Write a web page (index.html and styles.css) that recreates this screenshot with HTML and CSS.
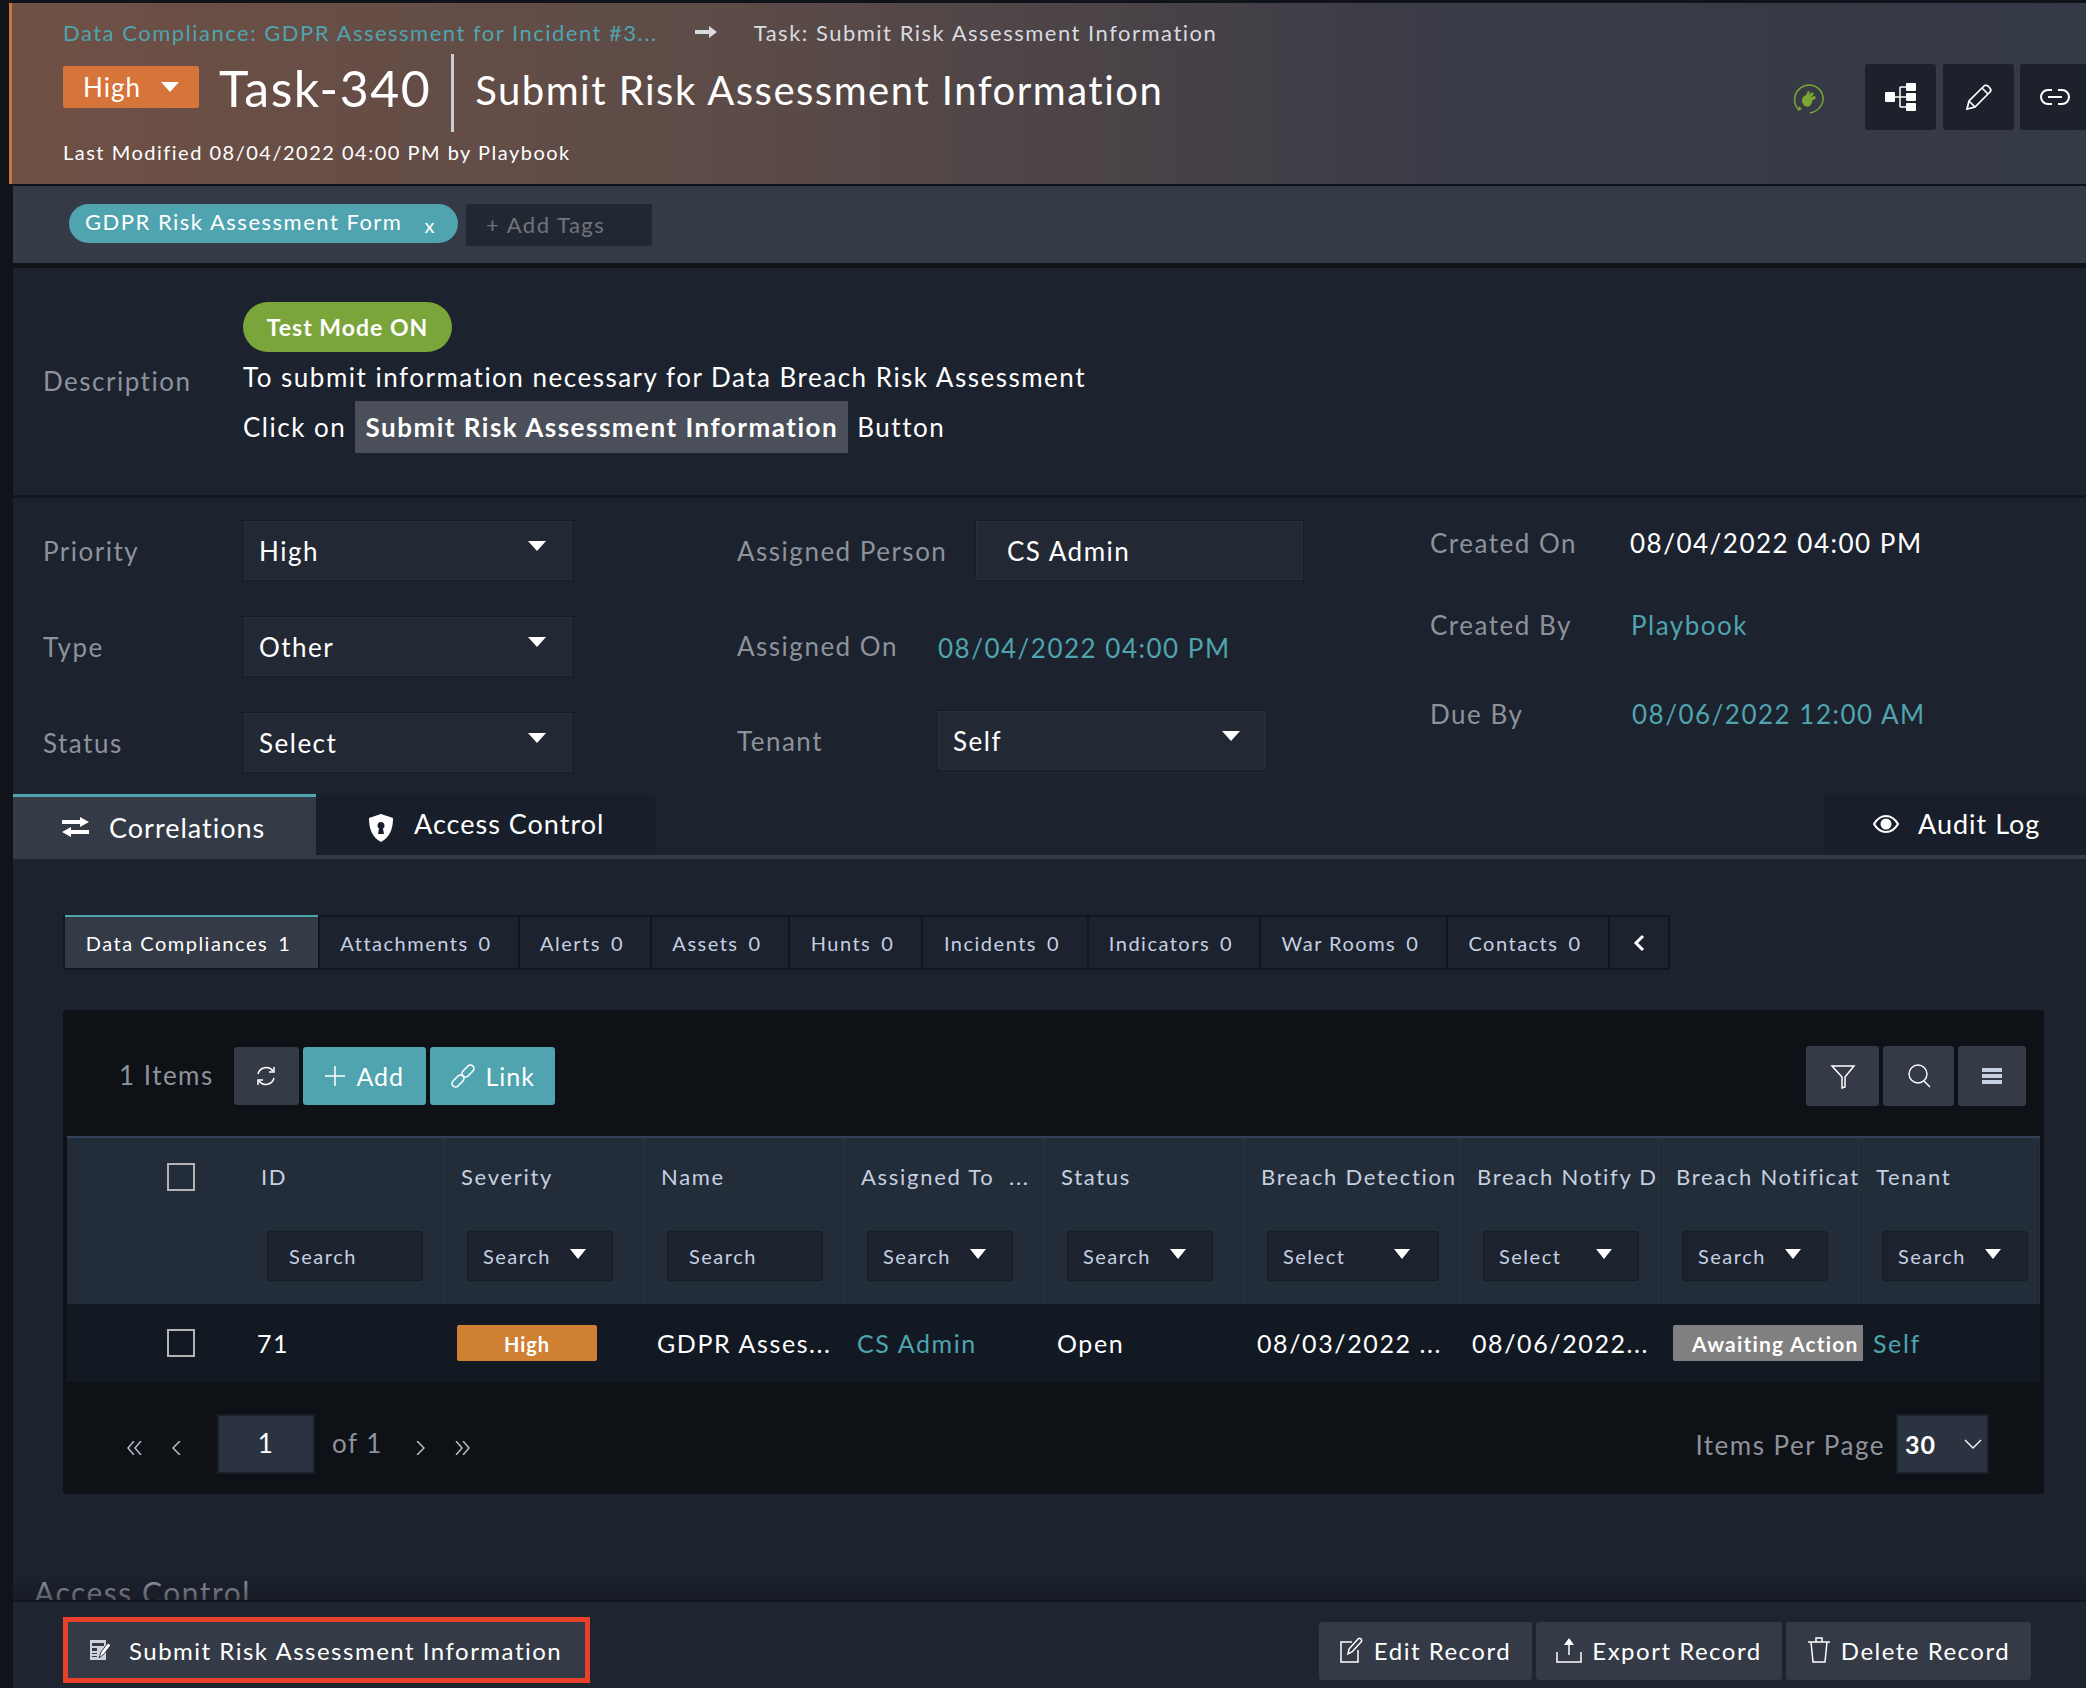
FILE: index.html
```html
<!DOCTYPE html>
<html lang="en">
<head>
    <meta charset="UTF-8">
    <meta name="viewport" content="width=device-width, initial-scale=1.0">
    <title>Task-340</title>
    <link rel="stylesheet" href="styles.css">
</head>
<body>
    <div class="page">
        <header class="task-head">
            <div class="head-left">
                <div class="crumbs">
                    <a class="crumb-link">Data Compliance: GDPR Assessment for Incident #3...</a>
                    <svg class="crumb-arrow" viewBox="0 0 22 12"><path d="M0 4h14V0l8 6-8 6V8H0z" fill="#d8dbe0"/></svg>
                    <span class="crumb-current">Task: Submit Risk Assessment Information</span>
                </div>
                <div class="title-row">
                    <span class="prio-btn">High <i class="caret"></i></span>
                    <span class="task-id">Task-340</span>
                    <h1 class="task-title">Submit Risk Assessment Information</h1>
                </div>
                <div class="modified">Last Modified 08/04/2022 04:00 PM by Playbook</div>
            </div>
            <div class="head-right">
                <svg class="plug" viewBox="0 0 30 30">
                    <path d="M5 26C1 22 0 17 1 12 3 5 9 1 15 1c7 0 13 5 14 12 1 7-4 14-13 16" fill="none" stroke="#78a833" stroke-width="1.5"/>
                    <path d="M4 27l1-5 3 3z" fill="#78a833"/>
                    <path d="M11 22c-3-2-4-6-2-9l3-2 2-4 2 1-1 3 3-3 2 2-3 3 4-1 1 2-4 3c0 4-3 7-7 5z" fill="#78a833"/>
                </svg>
                <button class="icon-btn">
                    <svg viewBox="0 0 32 28" width="32" height="28"><g fill="#fff"><rect x="0" y="9" width="10" height="10" rx="1"/><rect x="21" y="0" width="10" height="8" rx="1"/><rect x="21" y="10" width="10" height="8" rx="1"/><rect x="21" y="20" width="10" height="8" rx="1"/></g><path d="M10 14h11M15 4h6M15 24h6M15 4v20" stroke="#fff" stroke-width="1.5" fill="none"/></svg>
                </button>
                <button class="icon-btn">
                    <svg viewBox="0 0 28 28" width="28" height="28"><path d="M2 26l2-8L19 3c1-1 3-1 5 1s2 4 1 5L10 24zM4 18l6 6M17 5l6 6" fill="none" stroke="#fff" stroke-width="1.7"/></svg>
                </button>
                <button class="icon-btn icon-btn-last">
                    <svg viewBox="0 0 30 18" width="30" height="18"><path d="M12 2H8a7 7 0 0 0 0 14h4M18 2h4a7 7 0 0 1 0 14h-4M8 9h14" fill="none" stroke="#fff" stroke-width="2"/></svg>
                </button>
            </div>
        </header>

        <section class="tag-bar">
            <span class="tag">GDPR Risk Assessment Form <span class="tag-x">x</span></span>
            <span class="add-tags">+ Add Tags</span>
        </section>

        <section class="desc">
            <div class="field-label">Description</div>
            <div class="desc-body">
                <span class="test-pill">Test Mode ON</span>
                <p class="desc-line">To submit information necessary for Data Breach Risk Assessment</p>
                <p class="desc-line desc-line-btn">Click on <b class="desc-hl">Submit Risk Assessment Information</b> Button</p>
            </div>
        </section>

        <section class="fields">
            <div class="col col-one">
                <div class="field"><span class="field-label">Priority</span><span class="select">High <i class="caret"></i></span></div>
                <div class="field"><span class="field-label">Type</span><span class="select">Other <i class="caret"></i></span></div>
                <div class="field"><span class="field-label">Status</span><span class="select">Select <i class="caret"></i></span></div>
            </div>
            <div class="col col-two">
                <div class="field"><span class="field-label label-wide">Assigned Person</span><span class="select person">CS Admin</span></div>
                <div class="field"><span class="field-label label-mid">Assigned On</span><span class="link-text">08/04/2022 04:00 PM</span></div>
                <div class="field"><span class="field-label label-mid">Tenant</span><span class="select">Self <i class="caret"></i></span></div>
            </div>
            <div class="col col-three">
                <div class="meta meta-one"><span class="field-label">Created On</span><span class="meta-val">08/04/2022 04:00 PM</span></div>
                <div class="meta meta-two"><span class="field-label">Created By</span><span class="link-text">Playbook</span></div>
                <div class="meta meta-three"><span class="field-label">Due By</span><span class="link-text">08/06/2022 12:00 AM</span></div>
            </div>
        </section>

        <main class="content">
            <nav class="tabs">
                <a class="tab tab-active">
                    <svg viewBox="0 0 28 20" width="28" height="20"><path d="M0 3h18V0l9 5-9 5V7H0zM27 13H9v-3l-9 5 9 5v-3h18z" fill="#fff"/></svg>
                    Correlations
                </a>
                <a class="tab tab-access">
                    <svg viewBox="0 0 26 28" width="26" height="28"><path fill-rule="evenodd" d="M13 0l12 4c0 11-3 19-12 24C4 23 1 15 1 4zM13 8a3.500 3.500 0 0 0-2 6.400L10 20h6l-1-5.600A3.500 3.500 0 0 0 13 8z" fill="#fff"/></svg>
                    Access Control
                </a>
                <a class="tab tab-audit">
                    <svg viewBox="0 0 26 20" width="26" height="20"><path d="M1 10c3-5 7-8 12-8s9 3 12 8c-3 5-7 8-12 8s-9-3-12-8z" fill="none" stroke="#fff" stroke-width="2.200"/><circle cx="13" cy="10" r="5.500" fill="#fff"/></svg>
                    Audit Log
                </a>
            </nav>

            <div class="subtabs">
                <a class="subtab subtab-active">Data Compliances <span>1</span></a>
                <a class="subtab st-attach">Attachments <span>0</span></a>
                <a class="subtab st-alerts">Alerts <span>0</span></a>
                <a class="subtab st-assets">Assets <span>0</span></a>
                <a class="subtab st-hunts">Hunts <span>0</span></a>
                <a class="subtab st-incidents">Incidents <span>0</span></a>
                <a class="subtab st-indicators">Indicators <span>0</span></a>
                <a class="subtab st-war">War Rooms <span>0</span></a>
                <a class="subtab st-contacts">Contacts <span>0</span></a>
                <a class="subtab st-chev"><svg viewBox="0 0 12 18" width="12" height="18"><path d="M10 2L3 9l7 7" fill="none" stroke="#fff" stroke-width="3"/></svg></a>
            </div>

            <div class="panel">
                <div class="toolbar">
                    <span class="item-count">1 Items</span>
                    <button class="tool-btn refresh">
                        <svg viewBox="0 0 24 24" width="24" height="24"><path d="M4 10a8.500 8.500 0 0 1 15-3M20 14a8.500 8.500 0 0 1-15 3" fill="none" stroke="#fff" stroke-width="1.500"/><path d="M20 3v5h-5M4 21v-5h5" fill="none" stroke="#fff" stroke-width="1.500"/></svg>
                    </button>
                    <button class="teal-btn btn-add">
                        <svg viewBox="0 0 22 22" width="22" height="22"><path d="M11 1v20M1 11h20" stroke="#fff" stroke-width="1.500"/></svg>
                        Add
                    </button>
                    <button class="teal-btn btn-link">
                        <svg viewBox="0 0 26 26" width="26" height="26"><g fill="none" stroke="#fff" stroke-width="1.600"><rect x="1" y="14.500" width="14" height="7" rx="3.500" transform="rotate(-45 8 18)"/><rect x="11" y="4.500" width="14" height="7" rx="3.500" transform="rotate(-45 18 8)"/></g></svg>
                        Link
                    </button>
                    <div class="tool-right">
                        <button class="tool-btn tool-filter">
                            <svg viewBox="0 0 26 26" width="26" height="26"><path d="M2 3h22L15 14v10l-3 1V14z" fill="none" stroke="#fff" stroke-width="1.500"/></svg>
                        </button>
                        <button class="tool-btn tool-search">
                            <svg viewBox="0 0 26 26" width="26" height="26"><circle cx="12" cy="11" r="9" fill="none" stroke="#fff" stroke-width="1.400"/><path d="M18 18l6 6" stroke="#fff" stroke-width="1.400"/></svg>
                        </button>
                        <button class="tool-btn tool-menu">
                            <svg viewBox="0 0 20 16" width="20" height="16"><path d="M0 0h20v4H0zM0 6h20v4H0zM0 12h20v4H0z" fill="#c5d0e0"/></svg>
                        </button>
                    </div>
                </div>

                <div class="grid">
                    <div class="grid-head">
                        <div class="hcell hcell-check"><i class="checkbox"></i></div>
                        <div class="hcell hcell-id"><div class="htitle">ID</div><span class="filter f-input">Search</span></div>
                        <div class="hcell"><div class="htitle">Severity</div><span class="filter f-sel">Search <i class="caret"></i></span></div>
                        <div class="hcell"><div class="htitle">Name</div><span class="filter f-input">Search</span></div>
                        <div class="hcell"><div class="htitle">Assigned To &nbsp;...</div><span class="filter f-sel">Search <i class="caret"></i></span></div>
                        <div class="hcell"><div class="htitle">Status</div><span class="filter f-sel">Search <i class="caret"></i></span></div>
                        <div class="hcell"><div class="htitle">Breach Detection</div><span class="filter f-wide">Select <i class="caret"></i></span></div>
                        <div class="hcell"><div class="htitle">Breach Notify Date</div><span class="filter f-notify">Select <i class="caret"></i></span></div>
                        <div class="hcell"><div class="htitle">Breach Notification</div><span class="filter f-sel">Search <i class="caret"></i></span></div>
                        <div class="hcell"><div class="htitle">Tenant</div><span class="filter f-sel">Search <i class="caret"></i></span></div>
                    </div>
                    <div class="grid-row">
                        <div class="cell cell-check"><i class="checkbox"></i></div>
                        <div class="cell cell-id">71</div>
                        <div class="cell"><span class="badge badge-high">High</span></div>
                        <div class="cell">GDPR Asses...</div>
                        <div class="cell link-text">CS Admin</div>
                        <div class="cell">Open</div>
                        <div class="cell">08/03/2022 ...</div>
                        <div class="cell cell-notify">08/06/2022...</div>
                        <div class="cell cell-await"><span class="badge badge-await">Awaiting Action</span></div>
                        <div class="cell cell-await link-text">Self</div>
                    </div>
                </div>

                <div class="pager">
                    <svg class="pg-arrow pg-first" viewBox="0 0 15 14"><path d="M7 0L1 7l6 7M14 0L8 7l6 7"/></svg>
                    <svg class="pg-arrow pg-prev" viewBox="0 0 9 14"><path d="M8 0L1 7l7 7"/></svg>
                    <span class="pg-input">1</span>
                    <span class="pg-of">of 1</span>
                    <svg class="pg-arrow pg-next" viewBox="0 0 9 14"><path d="M1 0l7 7-7 7"/></svg>
                    <svg class="pg-arrow pg-last" viewBox="0 0 15 14"><path d="M1 0l6 7-6 7M8 0l6 7-6 7"/></svg>
                    <span class="per-page">Items Per Page</span>
                    <span class="per-select">30
                        <svg viewBox="0 0 18 10" width="18" height="10"><path d="M1 1l8 8 8-8" fill="none" stroke="#fff" stroke-width="1.300"/></svg>
                    </span>
                </div>
            </div>

            <h3 class="section-title">Access Control</h3>
            <div class="fade"></div>
        </main>

        <footer class="actions">
            <button class="submit-btn">
                <svg viewBox="0 0 24 24" width="24" height="24"><path d="M2 2h16v20H2z" fill="#cfd3d9"/><path d="M4 5h12v3H4zM4 10h5v3H4zM4 15h5v1H4zM4 18h5v1H4z" fill="#343a46"/><path d="M11 20l2-6 7-9 3 2-7 9z" fill="#fff" stroke="#343a46"/></svg>
                Submit Risk Assessment Information
            </button>
            <div class="actions-right">
                <button class="act-btn act-edit">
                    <svg viewBox="0 0 24 26" width="24" height="26"><path d="M12 5H1v20h17V13" fill="none" stroke="#fff" stroke-width="1.500"/><path d="M8 17l1-5L18 2c1-1 2-1 3 0s1 2 0 3l-9 10z" fill="none" stroke="#fff" stroke-width="1.500"/></svg>
                    Edit Record
                </button>
                <button class="act-btn act-export">
                    <svg viewBox="0 0 26 26" width="26" height="26"><path d="M1 15v10h24V15" fill="none" stroke="#fff" stroke-width="1.500"/><path d="M13 18V2" stroke="#fff" stroke-width="1.500"/><path d="M8 8l5-7 5 7z" fill="#fff"/></svg>
                    Export Record
                </button>
                <button class="act-btn act-delete">
                    <svg viewBox="0 0 24 26" width="24" height="26"><path d="M1 5h22M4 5l2 20h12l2-20M9 5V1h6v4" fill="none" stroke="#fff" stroke-width="1.500"/></svg>
                    Delete Record
                </button>
            </div>
        </footer>
    </div>
</body>
</html>
```
FILE: styles.css
```css
* {
    box-sizing: border-box;
}

html, body {
    margin: 0;
    height: 100%;
}

body {
    font-family: Lato, "Noto Sans", sans-serif;
    color: #fff;
    background-color: #10141a;
    letter-spacing: 1.5px;
    overflow: hidden;
}

button {
    font: inherit;
    letter-spacing: inherit;
    color: inherit;
    border: none;
    display: flex;
    align-items: center;
    justify-content: center;
    padding: 0;
}

h1, h3, p {
    margin: 0;
    font-weight: normal;
}

.page {
    height: 1688px;
    margin-left: 9px;
    padding-top: 3px;
    display: flex;
    flex-direction: column;
    box-shadow: 0 -3px 0 #2f2f2f;
}

/* header */
.task-head {
    height: 181px;
    flex: none;
    display: flex;
    border-left: 3px solid #c9733d;
    background: linear-gradient(90deg, #6f5045 0%, #5c4b47 35%, #3b3c47 68%, #343a46 100%);
    padding-left: 51px;
}

.head-left {
    display: flex;
    flex-direction: column;
}

.crumbs {
    display: flex;
    align-items: center;
    height: 40px;
    margin-top: 9px;
    font-size: 22px;
}

.crumb-link, .link-text {
    color: #4fa4af;
}

.crumb-arrow {
    width: 22px;
    height: 12px;
    margin: 0 37px;
}

.crumb-current {
    color: #d8dbe0;
}

.title-row {
    display: flex;
    align-items: center;
    height: 78px;
    margin-top: 2px;
}

.prio-btn {
    width: 136px;
    height: 42px;
    margin-top: -13px;
    background: #d6743a;
    border-radius: 2px;
    font-size: 26px;
    letter-spacing: 1px;
    padding-left: 20px;
    display: flex;
    align-items: center;
    gap: 20px;
}

.task-id {
    font-size: 50px;
    margin-left: 20px;
    margin-top: -11px;
    line-height: 1;
}

.task-title {
    font-size: 40px;
    height: 78px;
    line-height: 72px;
    margin-left: 20px;
    padding-left: 21px;
    border-left: 3px solid #c9cdd6;
}

.modified {
    font-size: 20px;
    margin-top: 8px;
}

.head-right {
    margin-left: auto;
    display: flex;
    gap: 7px;
    height: 134px;
    padding-top: 61px;
    align-items: flex-start;
}

.plug {
    width: 30px;
    height: 30px;
    margin: 20px 34px 0 0;
}

.icon-btn {
    width: 71px;
    height: 66px;
    background: #1c212c;
    border-radius: 3px;
}

.icon-btn-last {
    width: 66px;
    margin-left: -1px;
    padding-left: 4px;
    border-radius: 3px 0 0 3px;
}

/* tags */
.tag-bar {
    margin: 2px 0 0 4px;
    height: 77px;
    flex: none;
    background: #343a46;
    display: flex;
    padding: 18px 0 0 56px;
    gap: 8px;
    align-items: flex-start;
}

.tag {
    height: 39px;
    width: 389px;
    background: #4fa4af;
    border-radius: 20px;
    font-size: 22px;
    padding-left: 16px;
    line-height: 36px;
    white-space: nowrap;
}

.tag-x {
    margin-left: 15px;
    font-size: 20px;
    position: relative;
    top: 3px;
}

.add-tags {
    height: 42px;
    width: 186px;
    background: #222832;
    border-radius: 2px;
    color: #70757d;
    font-size: 22px;
    padding-left: 20px;
    line-height: 42px;
}

/* description */
.desc {
    margin: 5px 0 0 4px;
    height: 230px;
    flex: none;
    background: #1c222e;
    display: flex;
    padding: 34px 0 0 30px;
    border-bottom: 3px solid #12161d;
}

.desc > .field-label {
    width: 200px;
    margin-top: 63px;
}

.field-label {
    color: #8d929b;
    font-size: 26px;
}

.desc-body {
    font-size: 26px;
}

.test-pill {
    display: block;
    width: 209px;
    height: 50px;
    background: #7aa53a;
    border-radius: 25px;
    font-size: 23px;
    font-weight: bold;
    letter-spacing: 1px;
    line-height: 50px;
    text-align: center;
}

.desc-line {
    margin-top: 5px;
    line-height: 40px;
}

.desc-line-btn {
    margin-top: 4px;
    line-height: 52px;
}

.desc-hl {
    display: inline-block;
    background: #4a4f5a;
    padding: 0 10px;
    height: 52px;
    margin: 0 1px;
}

/* fields */
.fields {
    margin-left: 4px;
    height: 296px;
    flex: none;
    background: #1c222e;
    display: flex;
    padding-left: 30px;
}

.col {
    display: flex;
    flex-direction: column;
}

.col-one {
    width: 694px;
    padding-top: 23px;
    gap: 37px;
}

.col-two {
    width: 693px;
    padding-top: 23px;
    gap: 36px;
}

.field {
    display: flex;
    align-items: center;
    height: 59px;
}

.col-one .field-label {
    width: 201px;
}

.label-wide {
    width: 239px;
}

.label-mid {
    width: 201px;
}

.select {
    width: 328px;
    height: 59px;
    background: #232934;
    border: 1px solid #2a303b;
    box-shadow: 0 0 0 1px #171c25;
    font-size: 26px;
    padding: 0 25px 0 14px;
    display: flex;
    align-items: center;
    justify-content: space-between;
}

.select .caret {
    margin-top: -10px;
}

.person {
    width: 327px;
    padding-left: 30px;
}

.col-two .link-text {
    font-size: 26px;
    padding-top: 5px;
}

.col-three {
    flex: 1;
}

.meta {
    display: flex;
    align-items: center;
    height: 40px;
}

.meta .field-label {
    width: 200px;
}

.meta-one {
    margin-top: 25px;
}

.meta-two {
    margin-top: 42px;
}

.meta-two .link-text {
    margin-left: 1px;
}

.meta-three {
    margin-top: 49px;
}

.meta-three .link-text {
    margin-left: 2px;
}

.meta-val, .meta .link-text {
    font-size: 26px;
}

.caret {
    display: inline-block;
    width: 0;
    height: 0;
    border-left: 9px solid transparent;
    border-right: 9px solid transparent;
    border-top: 10px solid #fff;
}

/* main scroll area */
.content {
    margin-left: 4px;
    flex: 1;
    min-height: 0;
    overflow: hidden;
    background: #1c222e;
    position: relative;
}

.tabs {
    height: 66px;
    display: flex;
    border-bottom: 4px solid #343a46;
    font-size: 27px;
    letter-spacing: 1px;
    margin-top: -1px;
}

.tab {
    display: flex;
    align-items: center;
    height: 62px;
    background: #181e2a;
}

.tab svg {
    flex: none;
}

.tab-active {
    width: 303px;
    height: 62px;
    background: #343a46;
    border-top: 4px solid #4fa4af;
    padding-left: 49px;
    gap: 19px;
    padding-top: 2px;
}

.tab-access {
    width: 339px;
    padding-left: 52px;
    gap: 20px;
    padding-bottom: 1px;
}

.tab-access svg {
    margin-top: 8px;
}

.tab-audit {
    margin-left: auto;
    width: 263px;
    padding-left: 50px;
    gap: 19px;
    padding-bottom: 1px;
}

.subtabs {
    margin: 56px 0 0 50px;
    height: 55px;
    display: flex;
    width: fit-content;
    background: #12161d;
    padding: 2px;
    gap: 2px;
    font-size: 20px;
    color: #c5d0e0;
}

.subtab {
    background: #1c222e;
    height: 51px;
    display: flex;
    align-items: center;
    justify-content: center;
    gap: 10px;
    padding-right: 6px;
}

.subtab-active {
    width: 253px;
    background: #343a46;
    color: #fff;
    box-shadow: 0 -2px 0 #4fa4af;
}

.st-attach { width: 198px; }
.st-alerts { width: 130px; }
.st-assets { width: 136px; }
.st-hunts { width: 131px; }
.st-incidents { width: 164px; }
.st-indicators { width: 170px; }
.st-war { width: 185px; }
.st-contacts { width: 160px; }
.st-chev { width: 58px; padding-right: 0; }

.panel {
    margin: 40px 0 0 50px;
    width: 1981px;
    height: 484px;
    background: #0e1116;
    border-radius: 3px;
    padding: 36px 4px 0;
}

.toolbar {
    display: flex;
    align-items: center;
    height: 60px;
}

.item-count {
    color: #8d929b;
    font-size: 26px;
    margin-left: 52px;
    margin-right: 20px;
    margin-top: -2px;
}

.tool-btn {
    background: #343a46;
    border-radius: 3px;
    height: 60px;
}

.refresh {
    width: 65px;
    height: 58px;
    margin-right: 4px;
}

.teal-btn {
    background: #4fa4af;
    border-radius: 3px;
    height: 58px;
    font-size: 25px;
    letter-spacing: 1px;
    gap: 10px;
}

.btn-add {
    width: 123px;
    margin-right: 4px;
}

.btn-link {
    width: 125px;
}

.tool-right {
    margin-left: auto;
    margin-right: 14px;
    display: flex;
    gap: 4px;
}

.tool-filter { width: 73px; }
.tool-search { width: 71px; }
.tool-menu { width: 68px; }

.grid {
    margin-top: 30px;
}

.grid-head, .grid-row {
    display: grid;
    grid-template-columns: 183px 194px 200px 200px 200px 200px 216px 199px 200px 176px 5px;
}

.grid-head {
    height: 168px;
    background: #232c39;
    border-top: 2px solid #33415a;
}

.hcell {
    padding: 25px 0 0 17px;
    border-right: 1px solid #2a3441;
    min-width: 0;
    overflow: hidden;
}

.hcell-check {
    border-right: none;
    padding: 25px 0 0 100px;
}

.hcell-id {
    padding-left: 11px;
}

.htitle {
    font-size: 22px;
    letter-spacing: 1.7px;
    color: #c5d0e0;
    white-space: nowrap;
    overflow: hidden;
    height: 28px;
    line-height: 28px;
}

.filter {
    display: flex;
    align-items: center;
    justify-content: space-between;
    margin: 40px 0 0 6px;
    height: 50px;
    background: #1c222e;
    border: 1px solid #171c25;
    border-radius: 3px;
    font-size: 20px;
    color: #c5d0e0;
    padding: 0 26px 0 15px;
}

.filter .caret {
    border-left-width: 8px;
    border-right-width: 8px;
    border-top-width: 10px;
    margin-top: -4px;
}

.f-input { width: 156px; padding-left: 21px; }
.f-sel { width: 146px; }
.f-notify { width: 156px; }
.f-wide { width: 172px; padding-right: 28px; }

.checkbox {
    display: block;
    width: 28px;
    height: 28px;
    border: 2px solid #b4b4b4;
}

.grid-row {
    height: 78px;
    background: #121923;
    font-size: 25px;
    letter-spacing: 1.6px;
}

.cell {
    display: flex;
    align-items: center;
    padding-left: 13px;
    white-space: nowrap;
    min-width: 0;
}

.cell-check {
    padding-left: 100px;
}

.cell-id {
    padding-left: 7px;
}

.cell-notify {
    padding-left: 12px;
}

.cell-await {
    padding-left: 14px;
}

.badge {
    display: block;
    flex: none;
    height: 36px;
    line-height: 38px;
    border-radius: 2px;
    font-size: 20px;
    font-weight: bold;
    letter-spacing: 1px;
    text-align: center;
}

.badge-high {
    width: 140px;
    background: #d08033;
}

.badge-await {
    width: 190px;
    background: #808080;
    text-align: left;
    padding-left: 19px;
    border-radius: 2px 0 0 2px;
    font-size: 21px;
    letter-spacing: 1.2px;
}

.pager {
    display: flex;
    align-items: center;
    height: 60px;
    margin-top: 32px;
    color: #8d929b;
    font-size: 26px;
}

.pg-arrow {
    flex: none;
    height: 14px;
    margin-top: 8px;
    fill: none;
    stroke: #b9bec6;
    stroke-width: 1.5;
}

.pg-first, .pg-last { width: 15px; }
.pg-prev, .pg-next { width: 9px; }

.pg-first { margin-left: 60px; }
.pg-prev { margin-left: 30px; }
.pg-next { margin-left: 33px; }
.pg-last { margin-left: 30px; }

.pg-input {
    width: 98px;
    height: 60px;
    margin-left: 36px;
    background: #2c3340;
    border: 2px solid #1a202a;
    color: #fff;
    text-align: center;
    line-height: 54px;
}

.pg-of {
    margin: -3px 0 0 17px;
}

.per-page {
    margin-left: auto;
    margin-right: 11px;
    padding-top: 2px;
}

.per-select {
    width: 93px;
    height: 60px;
    margin-right: 51px;
    background: #2c3340;
    border: 2px solid #1a202a;
    color: #fff;
    display: flex;
    align-items: center;
    justify-content: space-between;
    padding: 0 5px 0 7px;
    font-size: 25px;
    letter-spacing: 1px;
    font-weight: bold;
}

.section-title {
    margin: 80px 0 0 21px;
    font-size: 30px;
    color: #9a9fa8;
    line-height: 36px;
}

.fade {
    position: absolute;
    left: 0;
    right: 0;
    bottom: 0;
    height: 26px;
    background: linear-gradient(180deg, rgba(18, 22, 29, 0), rgba(18, 22, 29, .5));
}

/* footer */
.actions {
    margin-left: 4px;
    height: 88px;
    flex: none;
    background: #1e2531;
    border-top: 2px solid #12161d;
    display: flex;
    padding: 15px 0 0 50px;
}

.submit-btn {
    width: 527px;
    height: 66px;
    background: #343a46;
    border: 5px solid #e8402a;
    font-size: 24px;
    gap: 17px;
    justify-content: flex-start;
    padding-left: 20px;
    color: #fff;
}

.actions-right {
    margin-left: auto;
    margin-right: 55px;
    margin-top: 5px;
    display: flex;
    gap: 4px;
}

.act-btn {
    height: 58px;
    background: #343a46;
    border-radius: 3px;
    font-size: 24px;
    gap: 10px;
    padding-bottom: 2px;
}

.act-edit { width: 213px; }
.act-export { width: 246px; }
.act-delete { width: 245px; }
```
